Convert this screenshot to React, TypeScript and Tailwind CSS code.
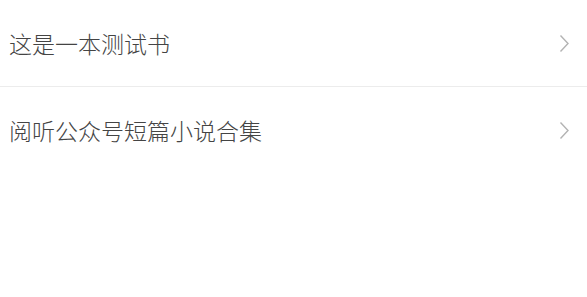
const books = ["这是一本测试书", "阅听公众号短篇小说合集"];

function Chevron() {
  return (
    <svg width="11" height="19" viewBox="0 0 11 19" fill="none" className="shrink-0">
      <path d="M1.5 1.5 L9 9.5 L1.5 17.5" stroke="#b3b3b3" strokeWidth="1.4" />
    </svg>
  );
}

export default function App() {
  return (
    <div
      className="min-h-[297px] w-full bg-white"
      style={{ fontFamily: '"Noto Sans CJK SC", "Noto Sans", sans-serif' }}
    >
      {books.map((title, i) => (
        <div
          key={title}
          className={`flex h-[87px] items-center justify-between pl-[9px] pr-[17px] ${
            i === 0 ? "border-b border-[#ececec]" : ""
          }`}
        >
          <span className="text-[23px] font-light leading-none text-[#444444]">{title}</span>
          <Chevron />
        </div>
      ))}
    </div>
  );
}
